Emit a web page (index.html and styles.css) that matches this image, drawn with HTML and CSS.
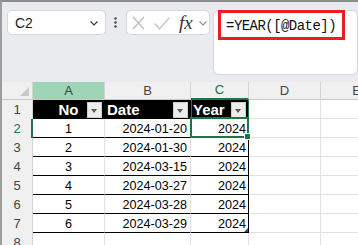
FILE: index.html
```html
<!DOCTYPE html>
<html>
<head>
<meta charset="utf-8">
<link rel="stylesheet" href="styles.css">
</head>
<body>
<div class="toolbar">
  <div class="namebox">
    <span class="name">C2</span>
    <svg class="chev" width="8" height="5" viewBox="0 0 8 5"><path d="M0.5 0.5 L4 4 L7.5 0.5" fill="none" stroke="#333" stroke-width="1.1"/></svg>
  </div>
  <div class="grip">
    <svg width="3" height="11" viewBox="0 0 3 11"><circle cx="1.5" cy="1.5" r="1.2" fill="#444"/><circle cx="1.5" cy="5.5" r="1.2" fill="#444"/><circle cx="1.5" cy="9.5" r="1.2" fill="#444"/></svg>
  </div>
  <div class="actions">
    <svg class="ic-x" width="13" height="14" viewBox="0 0 13 14"><path d="M1 1 L12 13 M12 1 L1 13" fill="none" stroke="#bababa" stroke-width="1.2"/></svg>
    <svg class="ic-ok" width="16" height="13" viewBox="0 0 16 13"><path d="M0.8 6.5 L5.5 11.8 L15.2 0.8" fill="none" stroke="#bababa" stroke-width="1.2"/></svg>
    <span class="fx">fx</span>
    <svg class="chev2" width="8" height="5" viewBox="0 0 8 5"><path d="M0.5 0.5 L4 4 L7.5 0.5" fill="none" stroke="#8a8a8a" stroke-width="1.1"/></svg>
  </div>
  <div class="formula"><span class="ftext">=YEAR([@Date])</span></div>
</div>
<div class="sheet">
  <div class="ch corner"></div>
  <div class="ch sel-a">A</div>
  <div class="ch">B</div>
  <div class="ch sel-c">C</div>
  <div class="ch">D</div>
  <div class="ch">E</div>

  <div class="rh">1</div>
  <div class="c th num">No<span class="filter"></span></div>
  <div class="c th">Date<span class="filter"></span></div>
  <div class="c th th-c">Year<span class="filter"></span></div>
  <div class="c"></div>
  <div class="c"></div>

  <div class="rh active">2</div>
  <div class="c td num">1</div>
  <div class="c td r">2024-01-20</div>
  <div class="c td r col-c cur">2024</div>
  <div class="c"></div>
  <div class="c"></div>

  <div class="rh">3</div>
  <div class="c td num">2</div>
  <div class="c td r">2024-01-30</div>
  <div class="c td r col-c">2024</div>
  <div class="c"></div>
  <div class="c"></div>

  <div class="rh">4</div>
  <div class="c td num">3</div>
  <div class="c td r">2024-03-15</div>
  <div class="c td r col-c">2024</div>
  <div class="c"></div>
  <div class="c"></div>

  <div class="rh">5</div>
  <div class="c td num">4</div>
  <div class="c td r">2024-03-27</div>
  <div class="c td r col-c">2024</div>
  <div class="c"></div>
  <div class="c"></div>

  <div class="rh">6</div>
  <div class="c td num">5</div>
  <div class="c td r">2024-03-28</div>
  <div class="c td r col-c">2024</div>
  <div class="c"></div>
  <div class="c"></div>

  <div class="rh">7</div>
  <div class="c td num">6</div>
  <div class="c td r">2024-03-29</div>
  <div class="c td r col-c last">2024</div>
  <div class="c"></div>
  <div class="c"></div>

  <div class="rh">8</div>
  <div class="c"></div>
  <div class="c"></div>
  <div class="c"></div>
  <div class="c"></div>
  <div class="c"></div>
</div>
</body>
</html>
```
FILE: styles.css
```css
html, body {
  margin: 0;
  padding: 0;
}
body {
  width: 358px;
  height: 245px;
  box-sizing: border-box;
  overflow: hidden;
  background: #e9ebee;
  border-top: 2px solid #8d8d8d;
  border-left: 2px solid #9d9d9d;
  font-family: "Liberation Sans", Arial, sans-serif;
}
.toolbar {
  display: flex;
  align-items: flex-start;
  height: 73px;
  box-sizing: border-box;
  padding: 8px 0 0 5px;
}
.namebox {
  width: 102px;
  height: 25px;
  box-sizing: border-box;
  background: #fff;
  border: 1px solid #d6d8db;
  border-radius: 5px;
  display: flex;
  align-items: center;
  padding: 0 7px 0 7px;
}
.name {
  font-size: 14px;
  color: #222;
}
.chev {
  margin-left: auto;
  margin-top: 2px;
}
.grip {
  width: 21px;
  height: 25px;
  display: flex;
  align-items: center;
  justify-content: center;
}
.actions {
  width: 87px;
  height: 25px;
  box-sizing: border-box;
  background: #fff;
  border: 1px solid #d6d8db;
  border-radius: 5px;
  display: flex;
  align-items: center;
  padding-left: 5px;
}
.ic-ok {
  margin-left: 9px;
  margin-top: 1px;
}
.fx {
  margin-left: 9px;
  font-family: "Liberation Serif", serif;
  font-style: italic;
  font-size: 19px;
  line-height: 20px;
  color: #333;
  width: 16px;
}
.chev2 {
  margin-left: 4px;
  margin-top: 1px;
}
.formula {
  margin-left: 3px;
  width: 150px;
  height: 65px;
  box-sizing: border-box;
  background: #fff;
  border: 1px solid #d6d8db;
  border-radius: 6px;
  padding: 5px 0 0 12px;
}
.ftext {
  position: relative;
  display: inline-block;
  font-family: "Liberation Mono", monospace;
  font-size: 14px;
  letter-spacing: -0.55px;
  line-height: 18px;
  color: #111;
  white-space: nowrap;
}
.ftext::after {
  content: "";
  position: absolute;
  left: -8px;
  top: -7px;
  width: 127px;
  height: 30px;
  box-sizing: border-box;
  border: 3px solid #ec1c24;
}
.sheet {
  margin-top: 7px;
  display: grid;
  grid-template-columns: 31px 72px 86px 58px 72px 72px;
  grid-template-rows: 18px repeat(8, 19px);
}
.ch {
  background: #f0f0f0;
  border-right: 1px solid #d4d4d4;
  border-bottom: 1px solid #c8c8c8;
  box-sizing: border-box;
  text-align: center;
  font-size: 13px;
  line-height: 17px;
  color: #444;
}
.corner {
  position: relative;
}
.corner::after {
  content: "";
  position: absolute;
  right: 3px;
  bottom: 3px;
  width: 0;
  height: 0;
  border-left: 9px solid transparent;
  border-bottom: 9px solid #c9c9c9;
}
.sel-a {
  background: #9fd5b7;
  color: #2c4a38;
}
.sel-c {
  color: #217346;
  border-bottom: 2px solid #217346;
  line-height: 16px;
}
.rh {
  background: #f0f0f0;
  border-right: 1px solid #d4d4d4;
  box-sizing: border-box;
  text-align: center;
  font-size: 13px;
  line-height: 16px;
  padding-top: 2px;
  color: #444;
}
.rh.active {
  color: #217346;
  box-shadow: inset -1px 0 0 #217346;
  border-right-color: #217346;
}
.c {
  background: #fff;
  border-right: 1px solid #e1e1e1;
  border-bottom: 1px solid #e1e1e1;
  box-sizing: border-box;
  font-size: 12.6px;
  line-height: 16px;
  padding: 2px 3px 0;
  color: #000;
  white-space: nowrap;
  overflow: hidden;
}
.th {
  position: relative;
  background: #000;
  color: #fff;
  font-weight: bold;
  font-size: 15px;
  line-height: 17px;
  padding: 1px 2px 0;
  border-right-color: #000;
  border-bottom-color: #000;
}
.th-c {
  border-right-color: #217346;
  box-shadow: inset 1px 0 0 #217346;
}
.filter {
  position: absolute;
  right: 2px;
  top: 2px;
  width: 15px;
  height: 16px;
  box-sizing: border-box;
  background: #ececec;
  border: 1px solid #cfcfcf;
}
.filter::after {
  content: "";
  position: absolute;
  left: 3px;
  top: 6px;
  width: 0;
  height: 0;
  border-left: 3.5px solid transparent;
  border-right: 3.5px solid transparent;
  border-top: 4px solid #5a5a5a;
}
.td {
  border-bottom-color: #000;
}
.num {
  text-align: center;
}
.r {
  text-align: right;
}
.col-c {
  border-right-color: #000;
  padding-right: 2px;
}
.cur {
  position: relative;
  overflow: visible;
}
.cur::after {
  content: "";
  position: absolute;
  left: -1px;
  right: -1px;
  top: -2px;
  bottom: -1px;
  border: 2px solid #217346;
  pointer-events: none;
}
.cur::before {
  content: "";
  position: absolute;
  right: -3px;
  bottom: -3px;
  width: 5px;
  height: 5px;
  background: #217346;
  border: 1px solid #fff;
  z-index: 2;
}
.last {
  position: relative;
}
.last::after {
  content: "";
  position: absolute;
  right: 0;
  bottom: 0;
  width: 0;
  height: 0;
  border-left: 4px solid transparent;
  border-bottom: 4px solid #3b3f9a;
}
```
